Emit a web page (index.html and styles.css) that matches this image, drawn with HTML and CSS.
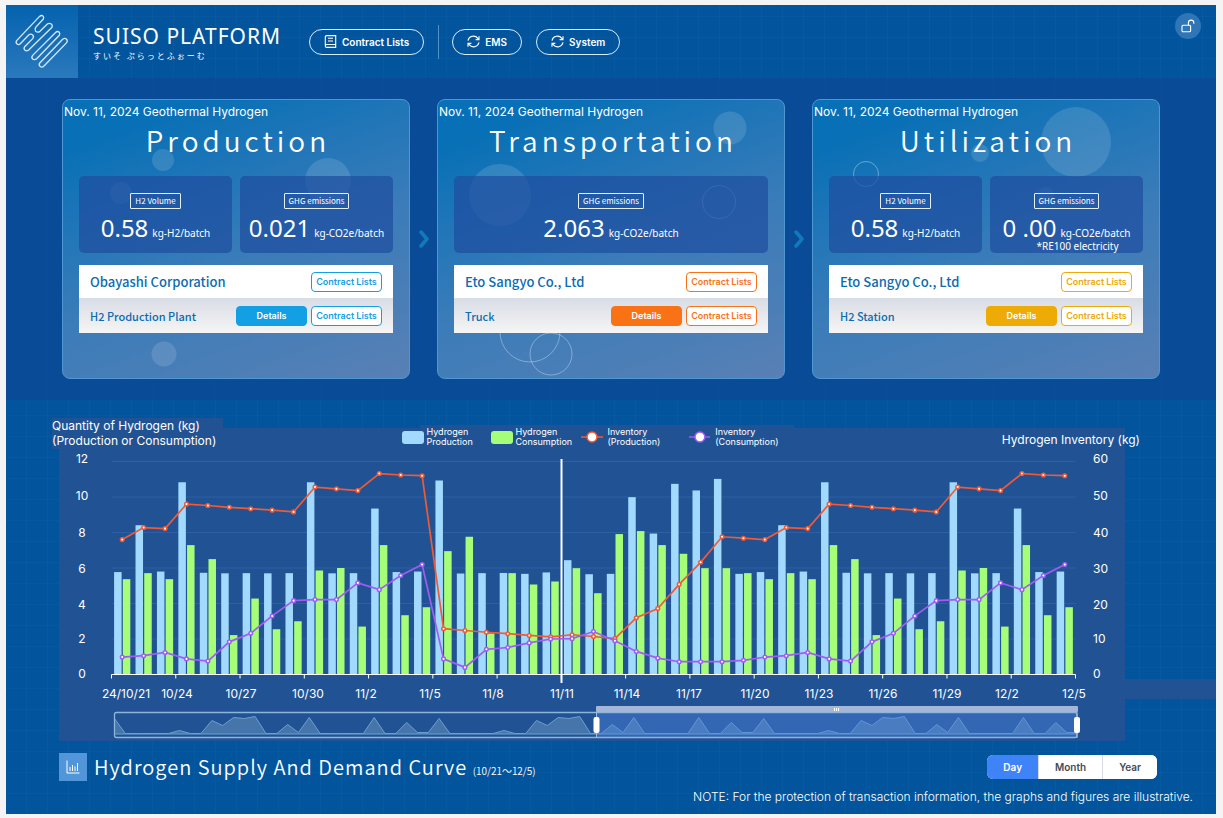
FILE: index.html
```html
<!DOCTYPE html>
<html lang="en">
<head>
<meta charset="utf-8">
<title>SUISO PLATFORM</title>
<link rel="stylesheet" href="styles.css">
</head>
<body>
<div class="app">
  <header class="topbar">
    <div class="logo">
      <svg viewBox="-12 -15 216 219" aria-hidden="true">
        <path d="M88 20L20 92Q16 98 21 102Q26 106 31 101L56 75Q62 70 68 75Q73 80 68 86L44 110Q40 116 45 121Q50 125 56 120L126 52Q129 46 124 42Q118 38 112 42L90 64Q83 69 77 64Q73 58 77 52L100 27Q103 21 98 17Q93 15 88 20Z"/>
        <path d="M136 68L68 136Q63 142 68 147Q74 151 80 146L148 76Q151 70 147 66Q142 62 136 68Z"/>
        <path d="M158 88L90 158Q85 164 90 169Q96 174 102 168L170 98Q174 92 169 87Q164 83 158 88Z"/>
      </svg>
    </div>
    <div class="brand">
      <h1 class="brand-name">SUISO PLATFORM</h1>
      <p class="brand-sub" lang="ja">すいそ ぷらっとふぉーむ</p>
    </div>
    <nav class="nav">
      <button class="pill" type="button">
        <svg class="pill-icon" viewBox="0 0 12 13" aria-hidden="true"><path d="M2.2.6h9v11.8H2.2a1.4 1.4 0 0 1-1.4-1.4V2A1.4 1.4 0 0 1 2.2.6zM.8 11a1.4 1.4 0 0 1 1.4-1.5h9M3.5 3.3h5M3.5 6h5"/></svg>
        Contract Lists
      </button>
      <span class="nav-divider"></span>
      <button class="pill" type="button">
        <svg class="pill-icon" viewBox="0 0 13 13" aria-hidden="true"><path d="M1 5.6A5.5 5.5 0 0 1 10.8 3.4L12 4.6M12 1.2v3.4H8.6M12 7.4A5.5 5.5 0 0 1 2.2 9.6L1 8.4M1 11.8V8.4h3.4"/></svg>
        EMS
      </button>
      <button class="pill" type="button">
        <svg class="pill-icon" viewBox="0 0 13 13" aria-hidden="true"><path d="M1 5.6A5.5 5.5 0 0 1 10.8 3.4L12 4.6M12 1.2v3.4H8.6M12 7.4A5.5 5.5 0 0 1 2.2 9.6L1 8.4M1 11.8V8.4h3.4"/></svg>
        System
      </button>
    </nav>
    <button class="lock" type="button" aria-label="Unlock">
      <svg viewBox="0 0 14 14" aria-hidden="true"><rect x="1" y="6.2" width="8.6" height="6.6" rx="1"/><path d="M7.4 6.2V3.8a2.7 2.7 0 0 1 5.4 0v1"/></svg>
    </button>
  </header>

  <main>
    <section class="stages">
      <article class="card">
        <svg class="bubbles" viewBox="0 0 346 278" aria-hidden="true">
          <circle cx="100" cy="60" r="11"/><circle cx="265" cy="81" r="23"/><circle cx="58" cy="93" r="11"/><circle cx="101" cy="254" r="12.5"/>
        </svg>
        <p class="card-date">Nov. 11, 2024 Geothermal Hydrogen</p>
        <h2 class="card-title">Production</h2>
        <div class="metrics">
          <div class="metric"><span class="badge">H2 Volume</span><p class="reading"><span class="value">0.58</span><span class="unit">kg-H2/batch</span></p></div>
          <div class="metric"><span class="badge">GHG emissions</span><p class="reading"><span class="value">0.021</span><span class="unit">kg-CO2e/batch</span></p></div>
        </div>
        <div class="rows blue">
          <div class="row"><span class="company">Obayashi Corporation</span><button class="btn" type="button">Contract Lists</button></div>
          <div class="row sub"><span class="plant">H2 Production Plant</span><button class="btn solid" type="button">Details</button><button class="btn" type="button">Contract Lists</button></div>
        </div>
      </article>
      <svg class="chevron" viewBox="0 0 10 18" aria-hidden="true"><path d="M2 2l6 7-6 7"/></svg>
      <article class="card">
        <svg class="bubbles" viewBox="0 0 346 278" aria-hidden="true">
          <circle cx="292" cy="28" r="16.5"/><circle cx="62" cy="95" r="31"/>
          <circle class="ring" cx="281" cy="102" r="16.5"/><circle class="ring" cx="92" cy="232" r="30"/><circle class="ring" cx="113" cy="254" r="21"/>
        </svg>
        <p class="card-date">Nov. 11, 2024 Geothermal Hydrogen</p>
        <h2 class="card-title">Transportation</h2>
        <div class="metrics">
          <div class="metric"><span class="badge">GHG emissions</span><p class="reading"><span class="value">2.063</span><span class="unit">kg-CO2e/batch</span></p></div>
        </div>
        <div class="rows orange">
          <div class="row"><span class="company">Eto Sangyo Co., Ltd</span><button class="btn" type="button">Contract Lists</button></div>
          <div class="row sub"><span class="plant">Truck</span><button class="btn solid" type="button">Details</button><button class="btn" type="button">Contract Lists</button></div>
        </div>
      </article>
      <svg class="chevron" viewBox="0 0 10 18" aria-hidden="true"><path d="M2 2l6 7-6 7"/></svg>
      <article class="card">
        <svg class="bubbles" viewBox="0 0 346 278" aria-hidden="true">
          <circle cx="263" cy="42" r="35"/><circle cx="167" cy="53" r="9"/><circle cx="233" cy="95" r="8"/>
          <circle class="ring" cx="53" cy="74" r="12.5"/>
        </svg>
        <p class="card-date">Nov. 11, 2024 Geothermal Hydrogen</p>
        <h2 class="card-title">Utilization</h2>
        <div class="metrics">
          <div class="metric"><span class="badge">H2 Volume</span><p class="reading"><span class="value">0.58</span><span class="unit">kg-H2/batch</span></p></div>
          <div class="metric"><span class="badge">GHG emissions</span><p class="reading"><span class="value">0 .00</span><span class="unit">kg-CO2e/batch</span></p><p class="footnote">*RE100 electricity</p></div>
        </div>
        <div class="rows amber">
          <div class="row"><span class="company">Eto Sangyo Co., Ltd</span><button class="btn" type="button">Contract Lists</button></div>
          <div class="row sub"><span class="plant">H2 Station</span><button class="btn solid" type="button">Details</button><button class="btn" type="button">Contract Lists</button></div>
        </div>
      </article>
    </section>

    <section class="supply">
      <figure class="chart">
        <figcaption class="chart-head">
          <span class="axis-title">Quantity of Hydrogen (kg)<br>(Production or Consumption)</span>
          <ul class="legend">
            <li><span class="swatch production"></span><span>Hydrogen<br>Production</span></li>
            <li><span class="swatch consumption"></span><span>Hydrogen<br>Consumption</span></li>
            <li><svg class="marker red" viewBox="0 0 22 12" aria-hidden="true"><path d="M0 6h22"/><circle cx="11" cy="6" r="5"/></svg><span>Inventory<br>(Production)</span></li>
            <li><svg class="marker violet" viewBox="0 0 22 12" aria-hidden="true"><path d="M0 6h22"/><circle cx="11" cy="6" r="5"/></svg><span>Inventory<br>(Consumption)</span></li>
          </ul>
          <span class="axis-title right">Hydrogen Inventory (kg)</span>
        </figcaption>
        <svg class="plot" id="plot" viewBox="52 450 1088 292" role="img" aria-label="Hydrogen supply and demand, 10/21 to 12/5"></svg>
      </figure>
      <div class="supply-foot">
        <span class="foot-icon"><svg viewBox="0 0 14 14" aria-hidden="true"><path d="M1 .5V13h12.500M4 11V7M6.500 11V5M9 11V6.500M11.500 11V3"/></svg></span>
        <h2 class="foot-title">Hydrogen Supply And Demand Curve <small>(10/21～12/5)</small></h2>
        <div class="segmented">
          <button class="seg active" type="button" aria-pressed="true">Day</button><button class="seg" type="button" aria-pressed="false">Month</button><button class="seg" type="button" aria-pressed="false">Year</button>
        </div>
      </div>
      <p class="note">NOTE: For the protection of transaction information, the graphs and figures are illustrative.</p>
    </section>
  </main>
</div>
<script src="chart.js"></script>
</body>
</html>
```
FILE: styles.css
```css
* { box-sizing: border-box; }
body { margin: 0; padding: 5px 7px 5px 6px; background: #f4f4f4; color: #fff; font-family: Inter, "Liberation Sans", sans-serif; }
h1, h2, p, ul, figure { margin: 0; padding: 0; font-weight: 400; }
button { margin: 0; font-family: inherit; cursor: pointer; }

.app {
  background:
    repeating-linear-gradient(90deg, transparent 0 20px, rgba(120, 190, 240, .035) 20px 21px),
    repeating-linear-gradient(0deg, transparent 0 20px, rgba(120, 190, 240, .035) 20px 21px),
    #02559d;
}

.topbar { display: flex; align-items: center; height: 73px; padding-right: 15px; }
.logo { width: 72px; height: 73px; background: linear-gradient(#0562ae, #2a79bd); }
.logo svg { display: block; width: 72px; height: 73px; fill: none; stroke: #cfe9fb; stroke-width: 4; }
.brand { margin-left: 15px; width: 216px; }
.brand-name { font: 400 21px/28px "Noto Sans", sans-serif; letter-spacing: 1px; white-space: nowrap; }
.brand-sub { font: 400 8px/12px "Noto Sans CJK JP", sans-serif; letter-spacing: 2px; }
.nav { display: flex; align-items: center; gap: 14px; }
.pill { display: flex; align-items: center; gap: 5px; height: 26px; padding: 0 14px; border: 1px solid #d8ecfa; border-radius: 13px; background: none; color: #fff; font-size: 10px; font-weight: 600; }
.pill-icon { width: 13px; height: 13px; fill: none; stroke: #fff; stroke-width: 1.1; }
.nav-divider { width: 1px; height: 34px; background: #4f92c8; }
.nav-divider + .pill { margin-left: -1px; }
.lock { display: flex; align-items: center; justify-content: center; width: 26px; height: 26px; margin-left: auto; margin-bottom: 32px; padding: 0; border: 0; border-radius: 50%; background: #2e76b6; }
.lock svg { width: 14px; height: 14px; fill: none; stroke: #fff; stroke-width: 1.1; }

.stages { display: flex; align-items: center; padding: 21px 56px; background: rgba(14, 72, 151, .75); }
.card { position: relative; flex: 1; min-width: 0; min-height: 280px; padding: 0 16px 43px; border: 1px solid #4e97d3; border-radius: 8px; background: linear-gradient(160deg, #0870b6 12%, #3a7cb9 55%, #5880b5); }
.chevron { flex: none; width: 10px; height: 18px; margin: 0 8px 0 9px; fill: none; stroke: #137ab8; stroke-width: 3.5; stroke-linecap: round; stroke-linejoin: round; }
.bubbles { position: absolute; left: 0; top: 0; width: 346px; height: 278px; fill: rgba(255, 255, 255, .13); }
.bubbles .ring { fill: none; stroke: rgba(200, 225, 250, .45); }
.card-date { position: relative; margin: 0 -15px; padding-top: 4px; font-size: 12px; line-height: 15px; }
.card-title { position: relative; font: 400 28px/36px "Noto Sans CJK JP", sans-serif; font-weight: 350; letter-spacing: 4px; text-align: center; margin-top: 3px; padding-left: 4px; }
.metrics { position: relative; display: flex; gap: 8px; margin-top: 18px; }
.metric { display: flex; flex: 1; flex-direction: column; align-items: center; height: 77px; padding-top: 17px; border-radius: 5px; background: rgba(30, 78, 160, .72); }
.badge { padding: 0 4px; border: 1px solid #e4effa; border-radius: 1px; font: 400 8px/14px "Noto Sans CJK JP", sans-serif; }
.reading { display: flex; align-items: baseline; gap: 4px; height: 28px; margin-top: 4px; white-space: nowrap; }
.value { font: 400 24px/30px "Noto Sans", sans-serif; }
.unit, .footnote { font: 400 10px/12px "Noto Sans", sans-serif; }
.footnote { margin-top: -1px; padding-left: 22px; }

.rows { position: relative; margin-top: 12px; color: #0b6cb1; }
.row { display: flex; align-items: center; gap: 4px; height: 33px; padding: 0 11px; background: #fff; font-family: "Noto Sans CJK JP", sans-serif; font-weight: 500; }
.row.sub { height: 35px; background: linear-gradient(#d8dce4, #f5f5f5); }
.company { margin-right: auto; font-size: 13px; }
.plant { margin-right: auto; font-size: 11px; }
.btn { width: 71px; height: 20px; padding: 0; border: 1px solid var(--accent); border-radius: 4px; background: #fff; color: var(--accent); font: 600 9px/16px Inter, sans-serif; }
.btn.solid { background: var(--accent); color: #fff; }
.blue { --accent: #129fe4; }
.orange { --accent: #f97316; }
.amber { --accent: #eeaa05; }

.supply { padding: 18px 0 9px; }
.chart {
  margin-left: 46px;
  background:
    linear-gradient(#215394, #215394) 0 0 / 171px 31px no-repeat,
    linear-gradient(#215394, #215394) 368px 7px / 374px 24px no-repeat,
    linear-gradient(#215394, #215394) 7px 10px / calc(100% - 98px) 313px no-repeat,
    linear-gradient(#215394, #215394) 100% 261px / 91px 20px no-repeat;
}
.chart-head { display: flex; justify-content: space-between; height: 32px; padding-right: 76px; font-size: 12px; line-height: 15px; }
.axis-title { flex: 1; }
.axis-title.right { padding-top: 14px; text-align: right; }
.legend { display: grid; grid-template-columns: 89px 90px 108px 90px; padding-top: 9px; padding-right: 12px; list-style: none; font-size: 9px; line-height: 10px; }
.legend li { display: flex; gap: 3px; }
.legend li:nth-child(n+3) { gap: 5px; }
.swatch { width: 22px; height: 13px; margin-top: 4px; border-radius: 3px; }
.swatch.production { background: #a2d9ff; }
.swatch.consumption { background: #a6fd77; }
.marker { width: 22px; height: 12px; margin-top: 4px; stroke-width: 1.5; fill: #fff; }
.red { stroke: #f15a34; }
.violet { stroke: #a05cf5; }
.plot { display: block; width: calc(100% - 76px); height: auto; }
.plot text { fill: #fff; font: 12px Inter, sans-serif; }
.plot .center { text-anchor: middle; }
.grid { stroke: #2c60a2; }
.axis { stroke: #fff; }
.today { stroke: #fff; stroke-width: 2; }
.bar-production { fill: #a2d9ff; }
.bar-consumption { fill: #a6fd77; }
.line { fill: none; stroke-width: 1.7; }
.dot { fill: #fff; stroke-width: 1.5; }
.zoom-frame { fill: none; stroke: #8fb4dc; stroke-width: 1.3; }
.zoom-area { fill: rgba(125, 170, 205, .4); stroke: #6e9fd0; }
.zoom-window { fill: rgba(80, 135, 225, .4); }
.zoom-bar { fill: #a6b6d8; }
.zoom-grip { stroke: #fff; }
.zoom-edge { stroke: #9fbde4; }
.zoom-handle { fill: #fff; }

.supply-foot { display: flex; align-items: center; height: 28px; margin: 11px 59px 0 53px; }
.foot-icon { display: flex; align-items: center; justify-content: center; width: 28px; height: 28px; background: #5096d8; }
.foot-icon svg { width: 14px; height: 14px; fill: none; stroke: #fff; }
.foot-title { margin-left: 7px; padding-top: 3px; font: 350 20px/28px "Noto Sans CJK JP", sans-serif; letter-spacing: 1px; white-space: nowrap; }
.foot-title small { font-size: 10px; letter-spacing: 0; }
.segmented { display: flex; height: 24px; margin-left: auto; border-radius: 6px; overflow: hidden; background: #fff; }
.seg { padding: 0 16px; border: 0; border-left: 1px solid #d5dae2; background: #fff; color: #454b55; font-size: 10px; font-weight: 600; }
.seg.active { border-left: 0; background: #3f83f8; color: #fff; }
.note { margin: 8px 23px 0 0; font-size: 12px; font-weight: 300; line-height: 16px; text-align: right; }
```
FILE: chart.js
```js
const plot = document.getElementById('plot');
const NS = 'http://www.w3.org/2000/svg';
function add(tag, attrs, text) {
  const el = document.createElementNS(NS, tag);
  for (const k in attrs) el.setAttribute(k, attrs[k]);
  if (text !== undefined) el.textContent = text;
  plot.appendChild(el);
}

// The last fifteen days repeat the first fifteen.
const cycle = a => a.concat(a.slice(0, 15));
const production = cycle([5.77, 8.41, 5.8, 10.83, 5.73, 5.7, 5.71, 5.7, 5.71, 10.83, 5.7, 5.71, 9.35, 5.77, 5.8, 10.93, 5.69, 5.71, 5.72, 5.67, 5.75, 6.44, 5.65, 5.67, 9.99, 7.94, 10.74, 10.37, 11.02, 5.67]);
const consumption = cycle([5.37, 5.71, 5.37, 7.29, 6.5, 2.22, 4.28, 2.55, 3, 5.86, 6, 2.7, 7.29, 3.34, 3.79, 6.95, 7.76, 2.31, 5.71, 5.07, 5.24, 5.99, 4.58, 7.91, 8.08, 7.29, 6.8, 5.99, 5.99, 5.71]);
const stockIn = cycle([38, 41.4, 41.1, 48, 47.6, 47.1, 46.7, 46.3, 45.8, 52.8, 52.3, 51.8, 56.6, 56.2, 56, 12.9, 12.4, 11.9, 11.5, 11, 10.6, 11.2, 10.7, 10.1, 16, 18.6, 25.4, 31.6, 38.8, 38.4]);
const stockOut = cycle([4.9, 5.3, 6.2, 4.4, 3.8, 9.2, 11.6, 16.5, 20.8, 21.1, 21.1, 25.8, 23.9, 27.9, 31, 4.4, 2, 7.1, 7.6, 8.9, 10, 10.1, 12.1, 9.5, 6.5, 4.6, 3.6, 3.6, 3.6, 4]);

const left = 111.5, right = 1075.5, base = 674.5, perUnit = 17.75;
const step = (right - left) / 45;

for (let v = 2; v <= 12; v += 2) add('line', { class: 'grid', x1: left, x2: right, y1: base - v * perUnit, y2: base - v * perUnit });
production.forEach((v, i) => add('rect', { class: 'bar-production', x: left + step * i + 2.6, y: base - v * perUnit, width: 7.5, height: v * perUnit }));
consumption.forEach((v, i) => add('rect', { class: 'bar-consumption', x: left + step * i + 11.3, y: base - v * perUnit, width: 7.5, height: v * perUnit }));
add('line', { class: 'axis', x1: left, x2: right, y1: base, y2: base });
for (let i = 0; i <= 45; i += 3) add('line', { class: 'axis', x1: left + step * i, x2: left + step * i, y1: base, y2: base + 4 });
add('line', { class: 'today', x1: 561.5, x2: 561.5, y1: 459, y2: 683 });

for (const [name, data] of [['red', stockIn], ['violet', stockOut]]) {
  const pts = data.map((v, i) => [left + step * (i + .5), base - v * perUnit / 5]);
  add('polyline', { class: 'line ' + name, points: pts.map(p => p.join()).join(' ') });
  pts.forEach(p => add('circle', { class: 'dot ' + name, cx: p[0], cy: p[1], r: 1.8 }));
}

[463, 500, 537, 573, 609, 643, 678].forEach((y, i) => {
  add('text', { class: 'center', x: 82, y }, 12 - i * 2);
  add('text', { x: 1093, y }, 60 - i * 10);
});
[['24/10/21', 126], ['10/24', 177], ['10/27', 241], ['10/30', 308], ['11/2', 366], ['11/5', 430], ['11/8', 493], ['11/11', 562], ['11/14', 627], ['11/17', 689], ['11/20', 755], ['11/23', 819], ['11/26', 883], ['11/29', 947], ['12/2', 1007], ['12/5', 1074]]
  .forEach(([t, x]) => add('text', { class: 'center', x, y: 698 }, t));

// Range slider
const wave = [15, 0, 0, 0, 0, 0, 3, 0, 0, 13, 8, 16, 15, 17, 0, 0, 9, 1, 16, 0, 0, 0, 0, 0, 16, 0, 0, 11, 1, 1];
let outline = '114.5,734';
for (let i = 0; i < 90; i++) outline += ` ${114.5 + i * 10.82},${733.5 - wave[i % 30]}`;
add('polygon', { class: 'zoom-area', points: outline + ' 1077,734' });
add('rect', { class: 'zoom-window', x: 596.5, y: 712, width: 480.5, height: 26 });
add('rect', { class: 'zoom-frame', x: 114.5, y: 712.5, width: 962.5, height: 25, rx: 2 });
add('rect', { class: 'zoom-bar', x: 596, y: 706, width: 482, height: 6, rx: 1 });
for (const x of [834.5, 836.5, 838.5]) add('line', { class: 'zoom-grip', x1: x, x2: x, y1: 708, y2: 711 });
for (const x of [596.5, 1077]) {
  add('line', { class: 'zoom-edge', x1: x, x2: x, y1: 712, y2: 738 });
  add('rect', { class: 'zoom-handle', x: x - 3, y: 717, width: 6, height: 16, rx: 2 });
}
```
